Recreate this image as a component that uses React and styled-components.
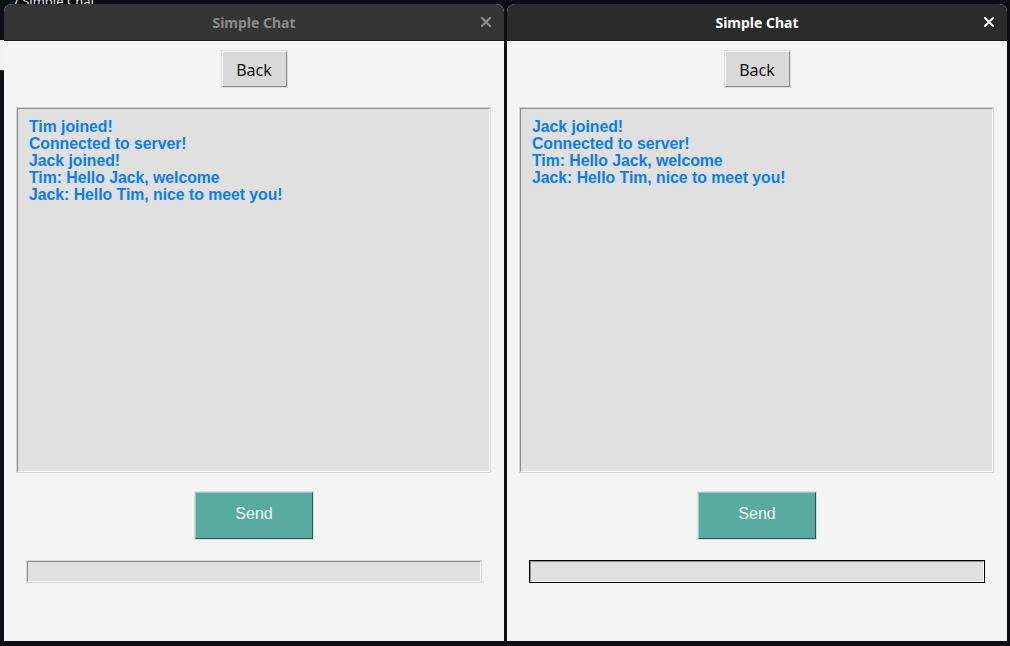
import React from "react";
import styled, { createGlobalStyle } from "styled-components";

const GlobalStyle = createGlobalStyle`
  html, body {
    margin: 0;
    padding: 0;
    background: #0c0e11;
  }
`;

const chats = [
  {
    active: false,
    focused: false,
    lines: [
      "Tim joined!",
      "Connected to server!",
      "Jack joined!",
      "Tim: Hello Jack, welcome",
      "Jack: Hello Tim, nice to meet you!",
    ],
  },
  {
    active: true,
    focused: true,
    lines: [
      "Jack joined!",
      "Connected to server!",
      "Tim: Hello Jack, welcome",
      "Jack: Hello Tim, nice to meet you!",
    ],
  },
];

const CloseIcon = ({ color }) => (
  <svg width="10" height="10" viewBox="0 0 10 10">
    <path d="M1 1 L9 9 M9 1 L1 9" stroke={color} strokeWidth="2" strokeLinecap="square" />
  </svg>
);

const ChatWindow = ({ active, focused, lines }) => (
  <Window>
    <TitleBar $active={active}>
      <Title $active={active}>Simple Chat</Title>
      <CloseBtn>
        <CloseIcon color={active ? "#ffffff" : "#8e8e8e"} />
      </CloseBtn>
    </TitleBar>
    <Body>
      <BackBtn>Back</BackBtn>
      <Log>
        {lines.map((l, i) => (
          <LogLine key={i}>{l}</LogLine>
        ))}
      </Log>
      <SendBtn>Send</SendBtn>
      <Entry $focused={focused}>
        <EntryInner />
      </Entry>
    </Body>
  </Window>
);

const App = () => {
  return (
    <>
      <GlobalStyle />
      <Desktop>
        <BehindTitle>/ Simple Chat</BehindTitle>
        <BehindEdge />
        <Windows>
          {chats.map((c, i) => (
            <ChatWindow key={i} {...c} />
          ))}
        </Windows>
      </Desktop>
    </>
  );
};

const Desktop = styled.div`
  position: relative;
  width: 1010px;
  height: 646px;
  overflow: hidden;
  background: #0c0e11;
`;

const BehindTitle = styled.div`
  position: absolute;
  left: 14px;
  top: -6px;
  font-family: "Noto Sans", sans-serif;
  font-size: 13px;
  line-height: 14px;
  color: #e8e8e8;
`;

const BehindEdge = styled.div`
  position: absolute;
  left: 0;
  top: 40px;
  width: 4px;
  height: 30px;
  background: #f2f2f2;
  border-bottom: 1px solid #333;
`;

const Windows = styled.div`
  position: relative;
  display: flex;
  gap: 3px;
  padding: 4px 0 0 4px;
`;

const Window = styled.div`
  width: 500px;
  height: 637px;
  display: flex;
  flex-direction: column;
  border-radius: 8px 8px 0 0;
  overflow: hidden;
  background: #f4f4f4;
`;

const TitleBar = styled.div`
  position: relative;
  height: 36px;
  flex-shrink: 0;
  display: flex;
  align-items: center;
  justify-content: center;
  background: ${(p) => (p.$active ? "#2b2b2b" : "#353535")};
  border-bottom: 1px solid #1c1c1c;
`;

const Title = styled.div`
  font-family: "Noto Sans", sans-serif;
  font-weight: bold;
  font-size: 14px;
  color: ${(p) => (p.$active ? "#ffffff" : "#8b8b8b")};
`;

const CloseBtn = styled.div`
  position: absolute;
  right: 13px;
  top: 13px;
  display: flex;
`;

const Body = styled.div`
  flex: 1;
  display: flex;
  flex-direction: column;
  align-items: center;
  padding-top: 10px;
`;

const BackBtn = styled.div`
  box-sizing: border-box;
  width: 65px;
  height: 36px;
  display: flex;
  align-items: center;
  justify-content: center;
  padding-top: 1px;
  background: #d9d9d9;
  border: 1px solid;
  border-color: #ffffff #8a8a8a #8a8a8a #ffffff;
  box-shadow: 0 0 0 1px #dcdcdc;
  font-family: "Noto Sans", sans-serif;
  font-size: 16px;
  color: #111;
`;

const Log = styled.div`
  box-sizing: border-box;
  align-self: flex-start;
  margin: 21px 0 0 13px;
  width: 473px;
  height: 364px;
  padding: 9px 11px;
  background: #e0e0e0;
  border: 1px solid;
  border-color: #8c8c8c #ffffff #ffffff #8c8c8c;
  box-shadow: 0 0 0 1px #d6d6d6;
`;

const LogLine = styled.div`
  font-family: "Liberation Sans", Arial, sans-serif;
  font-weight: bold;
  font-size: 15.75px;
  line-height: 17px;
  color: #0a7cfa;
  white-space: pre;
`;

const SendBtn = styled.div`
  box-sizing: border-box;
  margin-top: 20px;
  width: 118px;
  height: 47px;
  display: flex;
  align-items: center;
  justify-content: center;
  padding-bottom: 4px;
  background: #59aa9f;
  border: 1px solid;
  border-color: #8fd0c6 #2a5852 #2a5852 #8fd0c6;
  box-shadow: 0 0 0 1px #dcdcdc;
  font-family: "Liberation Sans", Arial, sans-serif;
  font-size: 16px;
  color: #f2fbfa;
`;

const Entry = styled.div`
  box-sizing: border-box;
  align-self: flex-start;
  margin: 21px 0 0 22px;
  width: 456px;
  height: 23px;
  border: 1px solid ${(p) => (p.$focused ? "#000000" : "#d6d6d6")};
  display: flex;
`;

const EntryInner = styled.div`
  flex: 1;
  background: #e0e0e0;
  border: 1px solid;
  border-color: #8c8c8c #ffffff #ffffff #8c8c8c;
`;

export default App;
